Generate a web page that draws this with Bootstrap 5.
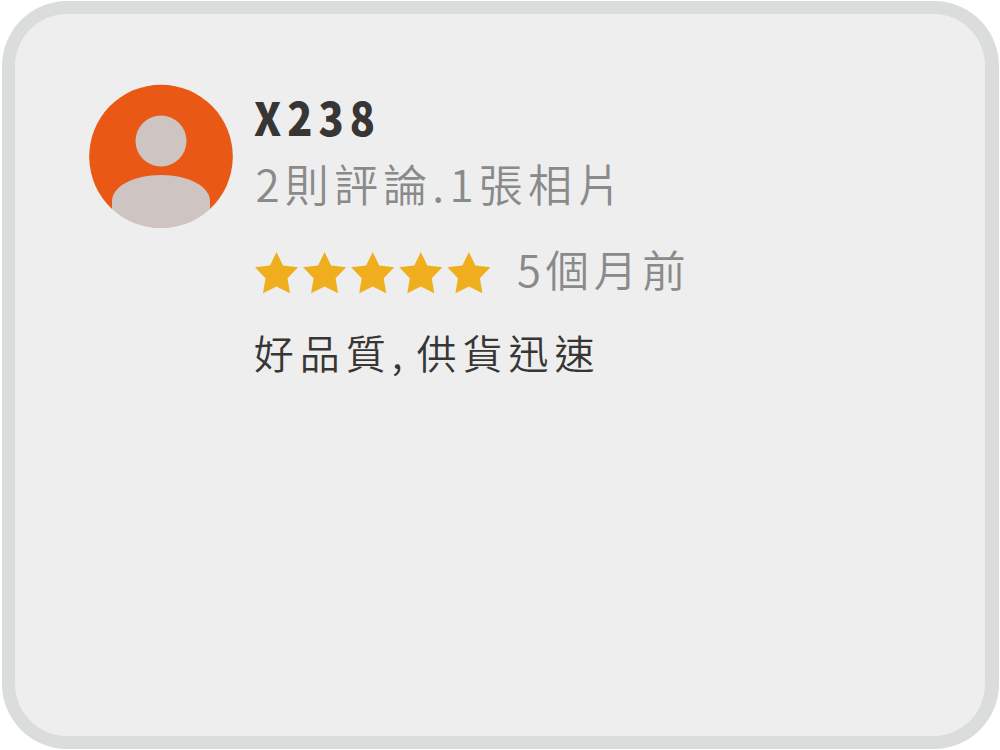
<!DOCTYPE html>
<html lang="zh-Hant">
<head>
    <meta charset="UTF-8">
    <title>X238 評論</title>
    <meta name="viewport" content="width=device-width, initial-scale=1">
    <!-- Bootstrap 5 CDN -->
    <link href="https://cdn.jsdelivr.net/npm/bootstrap@5.3.3/dist/css/bootstrap.min.css" rel="stylesheet">
    <style>
        body {
            background: #fff;
            font-family: "Noto Sans CJK TC", sans-serif;
            font-weight: 350;
            color: #373635;
        }
        .page {
            height: 750px;
            padding: 1px 1.5px 1px 2px;
        }
        .review-card {
            background: #eee;
            border: 13px solid #dadddc;
            border-right-width: 14px;
            border-radius: 65px;
            padding: 70px 74.4px;
        }
        .avatar {
            width: 144px;
            height: 144px;
        }
        .review-body {
            margin-left: 21px;
            white-space: nowrap;
        }
        .reviewer {
            font-size: 46px;
            font-weight: 900;
            line-height: 64px;
            letter-spacing: 6.7px;
        }
        .reviewer span {
            transform: scaleX(.9);
            transform-origin: left;
        }
        .meta {
            color: #8a8a8a;
            font-size: 44px;
            line-height: 64px;
            letter-spacing: 5px;
        }
        .summary {
            margin-top: 3px;
            padding-left: 1px;
            letter-spacing: 5.2px;
        }
        .rating {
            margin-top: 21px;
        }
        .stars {
            width: 237px;
            height: 44px;
            margin: 11px 0 0 .5px;
        }
        .posted {
            margin-left: 25px;
            padding-top: 1px;
            font-size: 43.5px;
            letter-spacing: 4.8px;
        }
        .comment {
            margin-top: 21px;
            font-size: 40px;
            line-height: 60px;
            letter-spacing: 6px;
            word-spacing: -7px;
            margin-left: -.7px;
        }
    </style>
</head>
<body>
    <div class="page">
        <div class="card review-card h-100">
            <div class="d-flex">
                <!-- Avatar -->
                <svg class="avatar flex-shrink-0" viewBox="0 0 144 144" aria-hidden="true">
                    <path d="M23 125A71.8 71.8 0 1 1 121 125Z" fill="#e95915"/>
                    <circle cx="72" cy="57" r="25.5" fill="#cec4c1"/>
                    <path d="M23 125V117C23 103 44 91 72 91S121 103 121 117V125A71.8 71.8 0 0 1 23 125Z" fill="#cec4c1"/>
                </svg>
                <div class="review-body">
                    <div class="reviewer"><span class="d-inline-block">X238</span></div>
                    <div class="meta summary">2則評論.1張相片</div>
                    <div class="rating d-flex align-items-center">
                        <svg class="stars flex-shrink-0" viewBox="0 0 237 44" fill="#eeae1d" aria-hidden="true">
                            <defs><path id="star" d="M21.5 0L28 13.5L43 15.2L32.5 26.2L35 41.2L21.5 34.5L8 41.2L10.5 26.2L0 15.2L15 13.5Z"/></defs>
                            <use href="#star"/>
                            <use href="#star" x="48.1"/>
                            <use href="#star" x="96.2"/>
                            <use href="#star" x="144.3"/>
                            <use href="#star" x="192.4"/>
                        </svg>
                        <span class="meta posted">5個月前</span>
                    </div>
                    <div class="comment">好品質, 供貨迅速</div>
                </div>
            </div>
        </div>
    </div>
    <script src="https://cdn.jsdelivr.net/npm/bootstrap@5.3.3/dist/js/bootstrap.bundle.min.js"></script>
</body>
</html>
